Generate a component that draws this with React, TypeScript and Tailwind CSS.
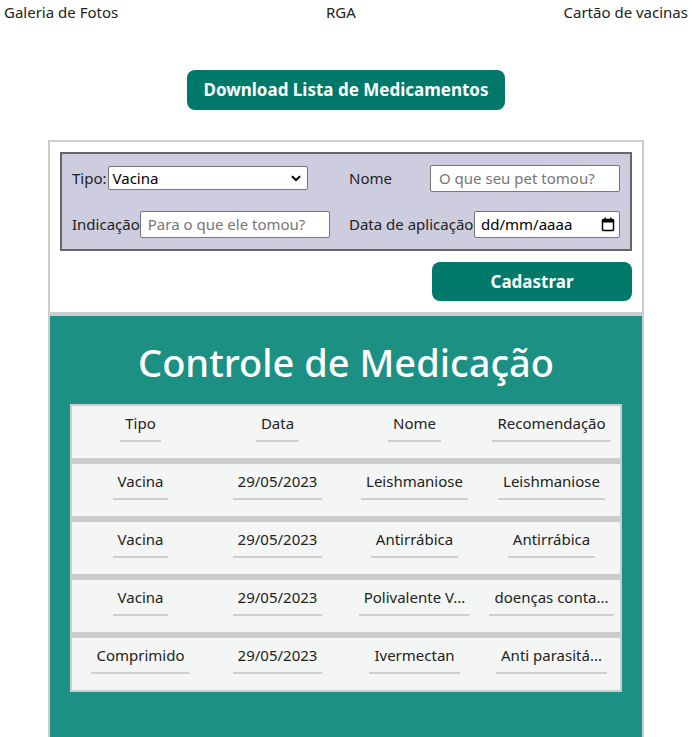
import React from "react";

const rows: string[][] = [
  ["Vacina", "29/05/2023", "Leishmaniose", "Leishmaniose"],
  ["Vacina", "29/05/2023", "Antirrábica", "Antirrábica"],
  ["Vacina", "29/05/2023", "Polivalente V...", "doenças conta..."],
  ["Comprimido", "29/05/2023", "Ivermectan", "Anti parasitá..."],
];

function Row({ cells }: { cells: string[] }) {
  return (
    <div className="grid grid-cols-4 h-[52px] bg-[#f4f6f5] pt-[6px] text-center">
      {cells.map((c, i) => (
        <div key={i}>
          <span className="inline-block px-[5px] pb-[6px] border-b-2 border-[#cfcfcf] leading-[22px] whitespace-nowrap">
            {c}
          </span>
        </div>
      ))}
    </div>
  );
}

export default function App() {
  return (
    <div
      className="bg-white text-[#222] text-[15px] min-h-[737px]"
      style={{ fontFamily: '"Noto Sans", "Open Sans", sans-serif' }}
    >
      <nav className="flex justify-between pl-[4px] pr-[7px] h-[24px] items-center">
        <span>Galeria de Fotos</span>
        <span>RGA</span>
        <span>Cartão de vacinas</span>
      </nav>

      <div className="flex mt-[46px] pl-[187px]">
        <button className="w-[318px] h-[40px] rounded-[8px] bg-[#00796b] text-white font-bold text-[17px]">
          Download Lista de Medicamentos
        </button>
      </div>

      <div className="w-[596px] ml-[48px] mt-[30px] border-2 border-[#cccccc] border-b-0">
        <div className="bg-white px-[10px] pt-[10px] pb-[11px] border-b-2 border-[#cccccc] flex flex-col items-end gap-[11px]">
          <div className="w-full bg-[#cecddf] border-2 border-[#666666] pt-[10px] pb-[11px] px-[10px] flex flex-col gap-[20px]">
            <div className="flex h-[27px] items-center pt-[1px]">
              <div className="w-[277px] flex items-center">
                <span className="mr-[1px]">Tipo:</span>
                <div className="relative w-[200px] h-[24px] bg-white border border-[#767676] rounded-[2px] flex items-center pl-[4px]">
                  <span className="text-black">Vacina</span>
                  <svg className="absolute right-[6px] top-[8px]" width="10" height="7" viewBox="0 0 10 7">
                    <path d="M1 1.2 L5 5.2 L9 1.2" stroke="#000" strokeWidth="2" fill="none" />
                  </svg>
                </div>
              </div>
              <div className="flex-1 flex items-center justify-between">
                <span>Nome</span>
                <div className="w-[190px] h-[27px] bg-white border border-[#767676] rounded-[2px] flex items-center pl-[8px] text-[#767676]">
                  O que seu pet tomou?
                </div>
              </div>
            </div>
            <div className="flex h-[27px] items-center">
              <div className="w-[277px] flex items-center">
                <span>Indicação</span>
                <div className="w-[190px] h-[27px] bg-white border border-[#767676] rounded-[2px] flex items-center pl-[7px] text-[#767676]">
                  Para o que ele tomou?
                </div>
              </div>
              <div className="flex-1 flex items-center justify-between">
                <span>Data de aplicação</span>
                <div className="w-[146px] h-[27px] bg-white border border-[#767676] rounded-[2px] flex items-center justify-between pl-[6px] pr-[4px] text-black">
                  <span>dd/mm/aaaa</span>
                  <svg width="14" height="15" viewBox="0 0 14 15">
                    <rect x="1.5" y="2.5" width="11" height="11" rx="1" fill="none" stroke="#000" strokeWidth="1.5" />
                    <rect x="1.5" y="2.5" width="11" height="3" fill="#000" />
                    <rect x="3.5" y="0.5" width="1.5" height="3" fill="#000" />
                    <rect x="9" y="0.5" width="1.5" height="3" fill="#000" />
                  </svg>
                </div>
              </div>
            </div>
          </div>
          <button className="w-[200px] h-[39px] rounded-[8px] bg-[#00796b] text-white font-bold text-[17px]">
            Cadastrar
          </button>
        </div>

        <div className="bg-[#1b9083] border-t-2 border-[#cccccc] px-[20px] pt-[20px] pb-[60px]">
          <h1 className="text-white text-center text-[38px] font-medium leading-[52px] mb-[16px]">
            Controle de Medicação
          </h1>
          <div className="bg-[#cccccc] p-[2px] flex flex-col gap-[6px]">
            <Row cells={["Tipo", "Data", "Nome", "Recomendação"]} />
            {rows.map((r, i) => (
              <Row key={i} cells={r} />
            ))}
          </div>
        </div>
      </div>
    </div>
  );
}
